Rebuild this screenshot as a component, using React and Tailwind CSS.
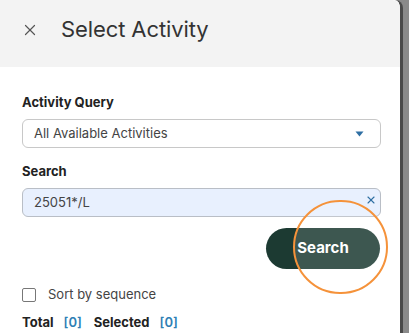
import { X } from 'lucide-react';

const App = () => {
    return (
        <div className="w-[409px] h-[333px] overflow-hidden bg-[#8a8a8a] flex font-['Inter',sans-serif]">
            {/* Dialog panel */}
            <div className="relative w-[403px] h-full bg-white rounded-tr-[8px] border-r-[3px] border-[#4a4a4a] flex flex-col">
                {/* Header */}
                <div className="h-[67px] bg-[#f3f3f3] rounded-tr-[8px] flex items-center pl-[21px] shrink-0">
                    <X size={18} strokeWidth={1.6} className="text-[#555] -mt-[8px]" />
                    <h1 className="ml-[22px] -mt-[9px] text-[22px] text-[#333] tracking-[-0.1px]">Select Activity</h1>
                </div>

                {/* Body */}
                <div className="flex flex-col pl-[22px] pr-[19px] pt-[26px]">
                    <label className="text-[13px] font-bold text-[#222] leading-[18px]">Activity Query</label>
                    <div className="mt-[8px] h-[29px] border border-[#c8c8c8] rounded-[6px] flex items-center justify-between pl-[11px] pr-[16px]">
                        <span className="text-[13px] text-[#444]">All Available Activities</span>
                        <svg width="9" height="6" viewBox="0 0 9 6">
                            <path d="M0.5 0.5 L8.5 0.5 L4.5 5.5 Z" fill="#2f6fa3" />
                        </svg>
                    </div>

                    <label className="mt-[14px] text-[13px] font-bold text-[#222] leading-[18px]">Search</label>
                    <div className="mt-[8px] h-[29px] border border-[#b9bec6] bg-[#e8f0fe] rounded-[6px] flex items-center justify-between pl-[11px] pr-[3px]">
                        <span className="text-[13px] text-[#444]">25051*/L</span>
                        <X size={12} strokeWidth={2.2} className="text-[#2f6fa3] -mt-[6px]" />
                    </div>

                    <div className="mt-[11px] flex justify-end pr-[1px]">
                        <button className="w-[114px] h-[41px] rounded-full bg-[#1c3a32] text-white text-[15px] font-bold">
                            Search
                        </button>
                    </div>

                    <div className="mt-[16px] flex items-center gap-[12px]">
                        <div className="w-[14px] h-[14px] border border-[#777] rounded-[2px] bg-white" />
                        <span className="text-[13px] text-[#444]">Sort by sequence</span>
                    </div>

                    <div className="mt-[8px] flex items-center text-[13px] font-bold">
                        <span className="text-[#222]">Total</span>
                        <span className="ml-[10px] text-[#2f7fb5] font-semibold">[0]</span>
                        <span className="ml-[12px] text-[#222]">Selected</span>
                        <span className="ml-[10px] text-[#2f7fb5] font-semibold">[0]</span>
                    </div>
                </div>

                {/* Highlight ring over the Search button */}
                <div className="absolute left-[293px] top-[200px] w-[95px] h-[94px] rounded-full border-[2.5px] border-[#f5923a] bg-white/15 pointer-events-none" />
            </div>
        </div>
    );
};

export default App;
